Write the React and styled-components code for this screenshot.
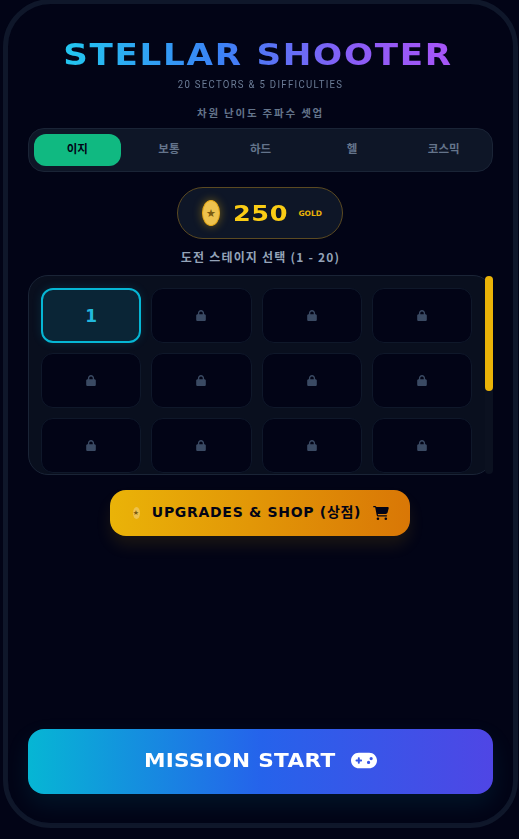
import React from "react";
import styled, { createGlobalStyle } from "styled-components";
import { FaLock, FaCartShopping, FaGamepad } from "react-icons/fa6";

const GlobalStyle = createGlobalStyle`
  html, body {
    margin: 0;
    height: 100%;
    overflow: hidden;
    background: #020416;
  }
`;

const KR = `"Noto Sans CJK KR", sans-serif`;
const DISPLAY = `"DejaVu Sans", "Noto Sans CJK KR", sans-serif`;

const Frame = styled.div`
  box-sizing: border-box;
  display: flex;
  flex-direction: column;
  width: 515px;
  height: 829px;
  margin: -1px 0 0 3px;
  padding: 0 20px 29px;
  border: 5px solid #0f172a;
  border-radius: 48px;
  background: #020416;
`;

const Title = styled.h1`
  align-self: center;
  width: 344px;
  height: 34px;
  margin: 34px 6px 0 0;
  line-height: 34px;
  text-align: center;
  white-space: nowrap;
  font-family: ${DISPLAY};
  font-size: 30px;
  font-weight: 700;
  letter-spacing: 1.5px;
  transform: scaleX(1.14);
  background: linear-gradient(90deg, #22c8f0 0%, #3b82f6 40%, #8b5cf6 75%, #a855f7 100%);
  background-clip: text;
  -webkit-background-clip: text;
  color: transparent;
`;

const Subtitle = styled.p`
  margin: 6px 0 0;
  height: 14px;
  line-height: 14px;
  text-align: center;
  font-family: "Roboto", sans-serif;
  font-size: 11px;
  letter-spacing: 1.5px;
  transform: scaleX(0.87);
  color: #6b7c96;
`;

const SectionLabel = styled.p`
  margin: ${(p) => p.$top}px 0 0;
  height: 16px;
  line-height: 16px;
  text-align: center;
  font-family: ${KR};
  font-size: ${(p) => p.$size}px;
  font-weight: 700;
  letter-spacing: ${(p) => p.$spacing}px;
  color: ${(p) => p.$color};
`;

const Tabs = styled.div`
  box-sizing: border-box;
  display: flex;
  gap: 5px;
  height: 44px;
  margin-top: 7px;
  padding: 5px;
  border: 1px solid #1a2436;
  border-radius: 16px;
  background: #0e1627;
`;

const Tab = styled.div`
  flex: 1;
  display: flex;
  align-items: center;
  justify-content: center;
  padding-bottom: 4px;
  box-sizing: border-box;
  border-radius: 12px;
  font-family: ${KR};
  font-size: 11.5px;
  font-weight: 700;
  color: ${(p) => (p.$active ? "#020416" : "#64748b")};
  background: ${(p) => (p.$active ? "#10b981" : "transparent")};
`;

const GoldPill = styled.div`
  box-sizing: border-box;
  align-self: center;
  display: flex;
  align-items: center;
  width: 166px;
  height: 52px;
  margin: 15px 1px 0 0;
  padding-left: 24px;
  border: 1px solid #5b4a22;
  border-radius: 26px;
  background: #0e1627;
`;

const Coin = styled.span`
  flex: none;
  display: flex;
  align-items: center;
  justify-content: center;
  width: ${(p) => (p.$small ? 7 : 18)}px;
  height: ${(p) => (p.$small ? 12 : 26)}px;
  border-radius: 50%;
  background: #eec24e;
  border: ${(p) => (p.$small ? 0 : "1px solid #e8a917")};
  box-sizing: border-box;
  box-shadow: ${(p) => (p.$small ? "none" : "0 0 10px rgba(234, 179, 8, 0.45)")};
  color: #7a5a10;
  font-family: "DejaVu Sans", sans-serif;
  font-size: ${(p) => (p.$small ? 7 : 11)}px;
  line-height: 1;
`;

const GoldAmount = styled.span`
  display: inline-block;
  margin-left: 13px;
  font-family: ${DISPLAY};
  font-size: 22px;
  font-weight: 700;
  letter-spacing: 0.5px;
  transform: scaleX(1.16);
  transform-origin: left center;
  color: #facc15;
`;

const GoldUnit = styled.span`
  margin-left: 18px;
  font-family: ${DISPLAY};
  font-size: 7.5px;
  font-weight: 700;
  color: #eab308;
`;

const StagePanel = styled.div`
  position: relative;
  box-sizing: border-box;
  flex: none;
  height: 200px;
  margin-top: 10px;
  border: 1px solid #1a2436;
  border-radius: 20px;
  background: #090f1e;
`;

const StageScroller = styled.div`
  height: 100%;
  overflow: hidden;
  border-radius: 19px;
`;

const ScrollTrack = styled.div`
  position: absolute;
  top: 0;
  right: -1px;
  bottom: 0;
  width: 8px;
  border-radius: 4px;
  background: #0b1120;
`;

const ScrollThumb = styled.div`
  height: 115px;
  border-radius: 4px;
  background: #eab308;
`;

const StageGrid = styled.div`
  display: grid;
  grid-template-columns: repeat(4, 1fr);
  gap: 10px;
  padding: 12px 20px 12px 12px;
`;

const StageCell = styled.div`
  box-sizing: border-box;
  display: flex;
  align-items: center;
  justify-content: center;
  height: 55px;
  border-radius: 12px;
  border: ${(p) => (p.$open ? "2px solid #06b6d4" : "1px solid #0f182a")};
  background: ${(p) => (p.$open ? "#0a2536" : "#020416")};
  box-shadow: ${(p) => (p.$open ? "0 0 10px rgba(6, 182, 212, 0.15)" : "none")};
  color: #22b8dc;
  font-family: ${DISPLAY};
  font-size: 17px;
  font-weight: 700;

  svg {
    width: 10px;
    height: 11px;
    color: #3a4a63;
  }
`;

const ShopButton = styled.button`
  box-sizing: border-box;
  align-self: center;
  display: flex;
  align-items: center;
  justify-content: center;
  flex: none;
  width: 300px;
  height: 46px;
  margin: 15px 1px 0 0;
  padding: 0 0 0 2px;
  border: 0;
  border-radius: 16px;
  background: linear-gradient(90deg, #eab308, #d97706);
  box-shadow: 0 10px 15px rgba(234, 179, 8, 0.1);
  color: #020416;
  font-family: ${DISPLAY};
  font-size: 14px;
  font-weight: 700;
  letter-spacing: 0.7px;

  svg {
    width: 16px;
    height: 14px;
    margin-left: 12px;
  }
`;

const ShopText = styled.span`
  margin-left: 12px;
  padding-bottom: 5px;
`;

const StartButton = styled.button`
  box-sizing: border-box;
  display: flex;
  align-items: center;
  justify-content: center;
  flex: none;
  height: 65px;
  margin-top: auto;
  padding: 0 0 0 7px;
  border: 0;
  border-radius: 16px;
  background: linear-gradient(90deg, #06b6d4, #2563eb 50%, #4f46e5);
  box-shadow: 0 10px 25px rgba(6, 182, 212, 0.1);
  color: #fff;
  font-family: ${DISPLAY};
  font-size: 20px;
  font-weight: 700;

  svg {
    width: 26px;
    height: 21px;
    margin: 0 0 2px 23px;
  }
`;

const StartLabel = styled.span`
  display: inline-block;
  padding-bottom: 4px;
  letter-spacing: 0.3px;
  transform: scaleX(1.08);
`;

const difficulties = ["이지", "보통", "하드", "헬", "코스믹"];
const stages = Array.from({ length: 20 }, (_, i) => i + 1);

export default function App() {
  return (
    <>
      <GlobalStyle />
      <Frame>
        <Title>STELLAR SHOOTER</Title>
        <Subtitle>20 SECTORS &amp; 5 DIFFICULTIES</Subtitle>
        <SectionLabel $top={13} $size={10.5} $spacing={1.8} $color="#64748b">
          차원 난이도 주파수 셋업
        </SectionLabel>
        <Tabs>
          {difficulties.map((name, i) => (
            <Tab key={name} $active={i === 0}>
              {name}
            </Tab>
          ))}
        </Tabs>
        <GoldPill>
          <Coin>★</Coin>
          <GoldAmount>250</GoldAmount>
          <GoldUnit>GOLD</GoldUnit>
        </GoldPill>
        <SectionLabel $top={10} $size={12} $spacing={1.2} $color="#94a3b8">
          도전 스테이지 선택 (1 - 20)
        </SectionLabel>
        <StagePanel>
          <StageScroller>
            <StageGrid>
              {stages.map((n) => (
                <StageCell key={n} $open={n === 1}>
                  {n === 1 ? n : <FaLock />}
                </StageCell>
              ))}
            </StageGrid>
          </StageScroller>
          <ScrollTrack>
            <ScrollThumb />
          </ScrollTrack>
        </StagePanel>
        <ShopButton>
          <Coin $small>★</Coin>
          <ShopText>UPGRADES &amp; SHOP (상점)</ShopText>
          <FaCartShopping />
        </ShopButton>
        <StartButton>
          <StartLabel>MISSION START</StartLabel>
          <FaGamepad />
        </StartButton>
      </Frame>
    </>
  );
}
